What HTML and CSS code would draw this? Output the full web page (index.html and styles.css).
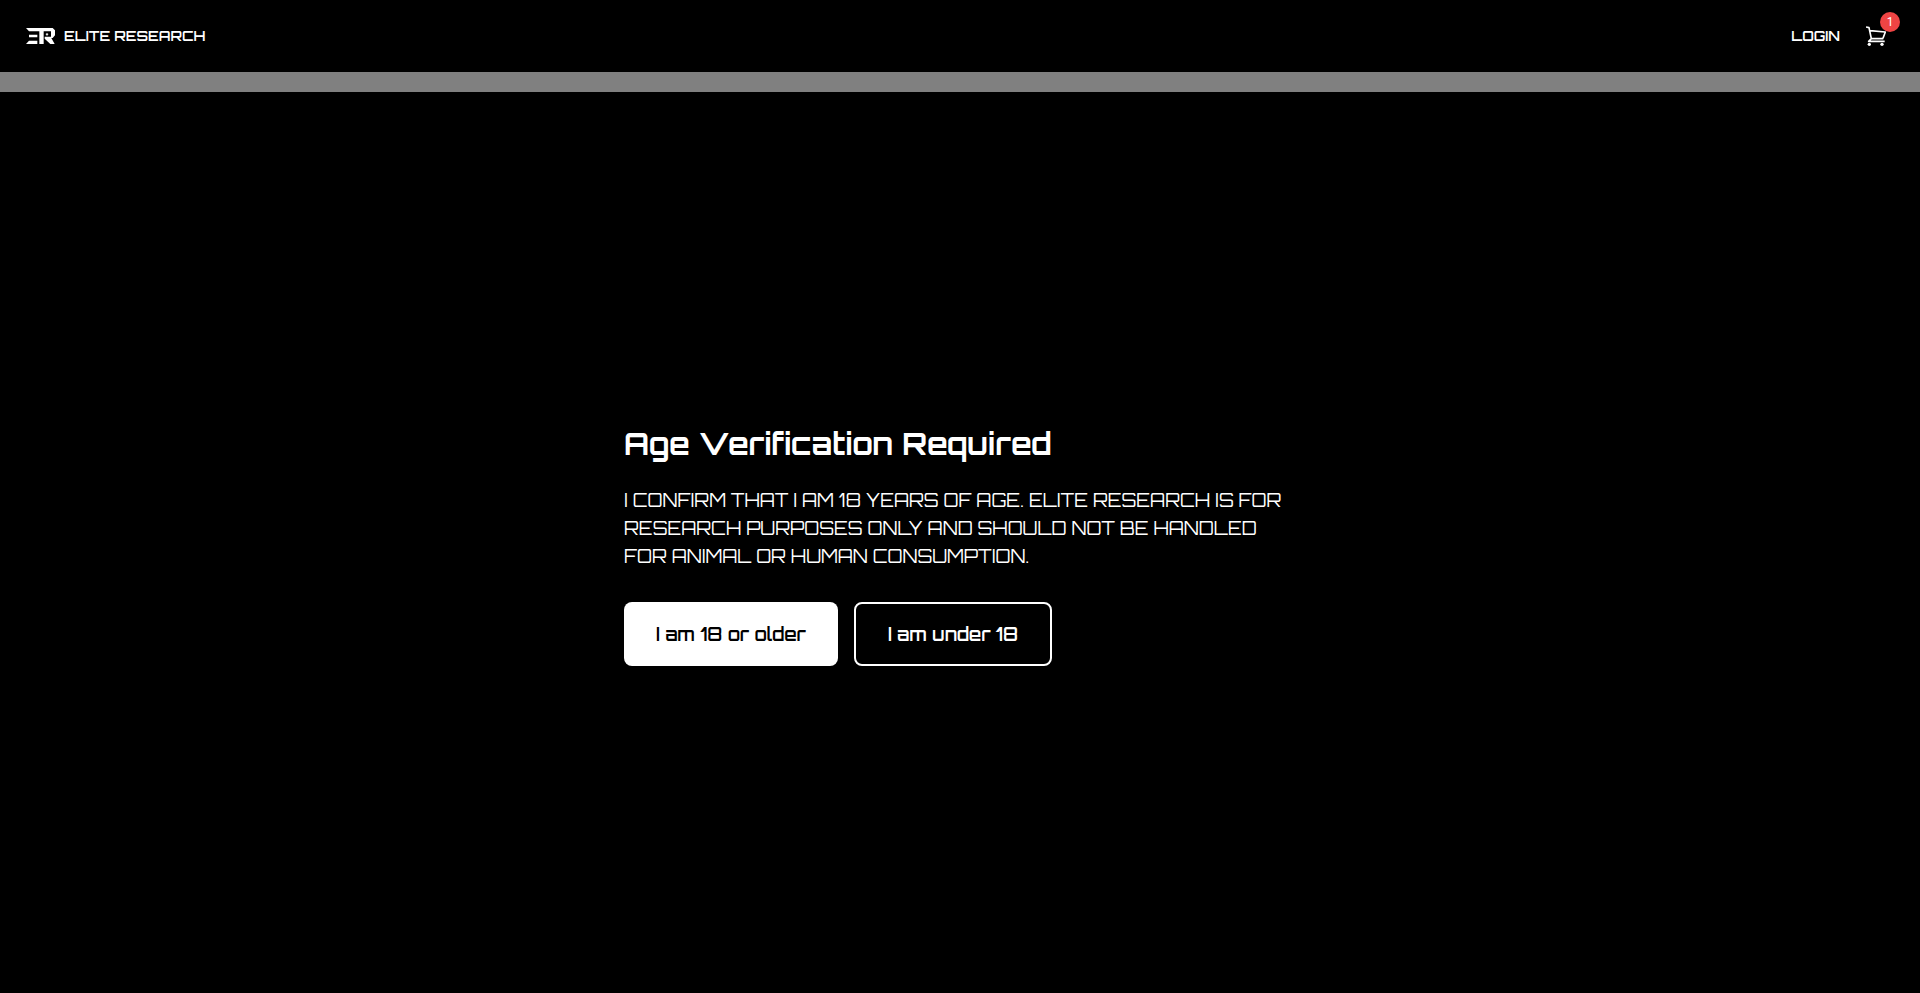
FILE: index.html
```html
<!DOCTYPE html>
<html lang="en">
<head>
    <meta charset="UTF-8">
    <meta name="viewport" content="width=device-width, initial-scale=1.0">
    <title>Elite Research</title>
    <link rel="stylesheet" href="styles.css">
</head>
<body>
    <header class="header">
        <a class="brand" href="/">
            <svg class="logo" viewBox="0 0 87 48" aria-hidden="true">
                <path d="M0 0H80L87 7V22L80 30H76L86 48H73L56 32V26H75V10H53V48H40V10H9Z"/>
                <path d="M9 20H34V28H9ZM9 38H34V48H0Z"/>
                <path d="M63 14L65 17L68 18L65 20L65 23L63 22L61 23L61 20L58 18L61 17Z"/>
            </svg>
            <span>ELITE RESEARCH</span>
        </a>
        <nav class="nav">
            <a class="login" href="/login">LOGIN</a>
            <a class="cart" href="/cart" aria-label="Cart">
                <svg class="cart-icon" viewBox="0 0 60 60">
                    <path d="M0 3L9 5L16 38H52M12 14L58 18L51 37M16 38L8 46H56"/>
                    <circle cx="10" cy="55" r="5"/>
                    <circle cx="48" cy="55" r="5"/>
                </svg>
                <span class="badge">1</span>
            </a>
        </nav>
    </header>
    <div class="strip"></div>
    <main class="main">
        <section class="age-gate">
            <h1>Age Verification Required</h1>
            <p>I CONFIRM THAT I AM 18 YEARS OF AGE. ELITE RESEARCH IS FOR
                RESEARCH PURPOSES ONLY AND SHOULD NOT BE HANDLED
                FOR ANIMAL OR HUMAN CONSUMPTION.</p>
            <div class="actions">
                <button type="button" class="btn btn-primary">I am 18 or older</button>
                <button type="button" class="btn btn-outline">I am under 18</button>
            </div>
        </section>
    </main>
</body>
</html>
```
FILE: styles.css
```css
* {
    box-sizing: border-box;
}
body {
    margin: 0;
    min-height: 100vh;
    display: flex;
    flex-direction: column;
    background-color: #000;
    color: #fff;
    font-family: Orbitron, Inter, sans-serif;
}
a {
    color: inherit;
    text-decoration: none;
}
.header {
    display: flex;
    align-items: center;
    justify-content: space-between;
    height: 72px;
    padding: 0 34px 0 26px;
}
.brand {
    display: flex;
    align-items: center;
    gap: 9px;
    font-size: 14px;
    line-height: 20px;
    font-weight: 600;
}
.logo {
    width: 29px;
    height: 16px;
    fill: #fff;
}
.nav {
    display: flex;
    align-items: center;
    gap: 26px;
}
.login {
    font-size: 14px;
    line-height: 20px;
    font-weight: 600;
}
.cart {
    position: relative;
    display: block;
    height: 20px;
}
.cart-icon {
    display: block;
    width: 20px;
    height: 20px;
    fill: #fff;
}
.cart-icon path {
    fill: none;
    stroke: #fff;
    stroke-width: 5;
    stroke-linejoin: round;
}
.badge {
    position: absolute;
    top: -14px;
    right: -14px;
    width: 20px;
    height: 20px;
    border-radius: 50%;
    background-color: #ef4444;
    font-family: Roboto, sans-serif;
    font-size: 12px;
    line-height: 20px;
    text-align: center;
}
.strip {
    height: 20px;
    background-color: #808080;
}
.main {
    flex: 1;
    display: flex;
    align-items: center;
    justify-content: center;
    padding-top: 6px;
}
.age-gate {
    width: 100%;
    max-width: 672px;
}
h1 {
    margin: 0 0 24px;
    font-size: 30px;
    line-height: 36px;
    font-weight: 700;
}
p {
    margin: 0 0 32px;
    font-size: 18px;
    line-height: 28px;
    font-weight: 400;
}
.actions {
    display: flex;
    gap: 16px;
}
.btn {
    padding: 16px 32px;
    border: none;
    border-radius: 8px;
    font-family: inherit;
    font-size: 18px;
    line-height: 28px;
    font-weight: 600;
    cursor: pointer;
}
.btn-primary {
    background-color: #fff;
    color: #000;
}
.btn-outline {
    border: 2px solid #fff;
    background-color: #000;
    color: #fff;
}
```
